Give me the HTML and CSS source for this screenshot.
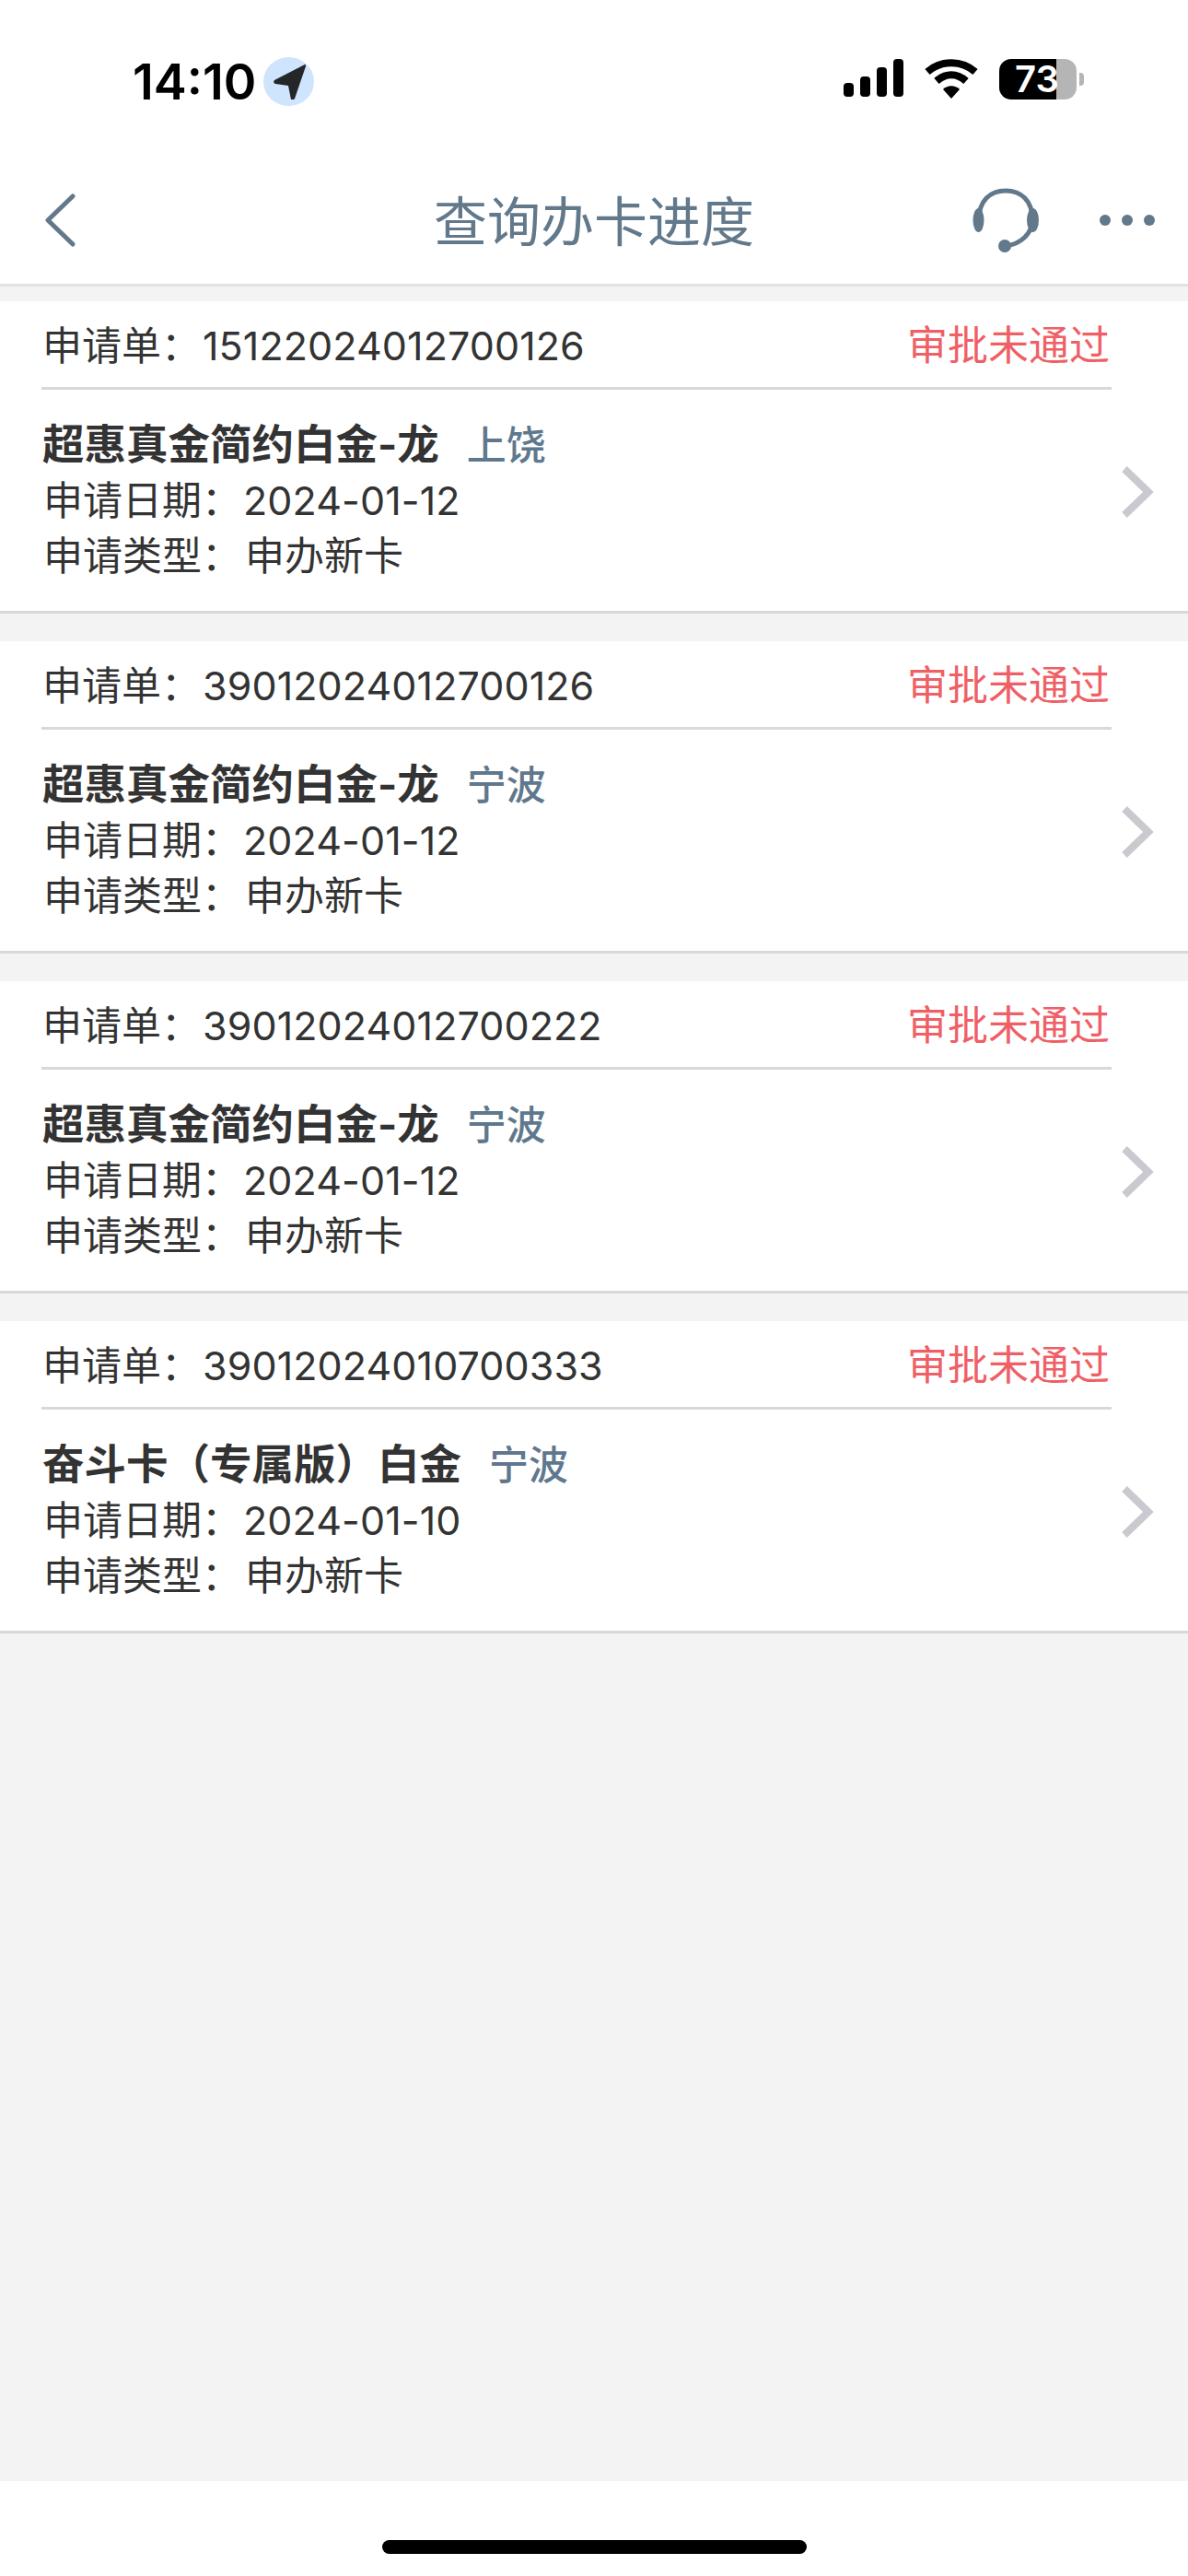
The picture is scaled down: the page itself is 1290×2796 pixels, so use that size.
FILE: index.html
```html
<!DOCTYPE html>
<html lang="zh-CN">
  <head>
    <meta charset="UTF-8" />
    <title>查询办卡进度</title>
    <link rel="stylesheet" href="styles.css">
  </head>
  <body>
    <div class="status-bar">
      <div class="status-left">
        <span class="time">14:10</span>
        <span class="location">
          <svg width="38" height="38" viewBox="0 0 38 38">
            <path d="M36 3 L3 20 Q1 23 4 24 L18 26 L21 41 Q23 43 25 40 L37 5 Q37 2 36 3 Z" transform="translate(0 -3)" fill="#24262a" />
          </svg>
        </span>
      </div>
      <div class="status-right">
        <svg width="65" height="41" viewBox="0 0 65 41" fill="#000">
          <rect x="0" y="26" width="11" height="15" rx="4" />
          <rect x="18" y="19" width="11" height="22" rx="4" />
          <rect x="36" y="9" width="11" height="32" rx="4" />
          <rect x="54" y="0" width="11" height="41" rx="4" />
        </svg>
        <svg class="wifi" width="58" height="43" viewBox="0 0 58 43" fill="none" stroke="#000" stroke-width="8">
          <path d="M3 14 C18 1 40 1 55 14" />
          <path d="M13 24 C23 15 35 15 45 24" />
          <path d="M29 43 L20 33 C25 28 33 28 38 33 Z" fill="#000" stroke="none" />
        </svg>
        <div class="battery"><span>73</span></div>
        <div class="battery-tip"></div>
      </div>
    </div>

    <div class="nav">
      <svg class="back" width="36" height="58" viewBox="0 0 36 58" fill="none" stroke="#62788b" stroke-width="5" stroke-linecap="round" stroke-linejoin="round">
        <path d="M31 3 L4 29 L31 55" />
      </svg>
      <h1>查询办卡进度</h1>
      <svg class="headset" width="72" height="70" viewBox="0 0 72 70" fill="none" stroke="#62788b" stroke-width="5">
        <path d="M7 34 C7 14 19 3 36 3 C53 3 65 14 65 34 C65 50 52 61 36 63" />
        <ellipse cx="6.500" cy="35" rx="6" ry="13" fill="#62788b" stroke="none" />
        <ellipse cx="65.500" cy="35" rx="6.500" ry="13" fill="#62788b" stroke="none" />
        <circle cx="35" cy="63" r="7" fill="#62788b" stroke="none" />
      </svg>
      <div class="dots"><i></i><i></i><i></i></div>
    </div>

    <div class="list">
      <div class="card">
        <div class="card-head">
          <span>申请单：<span class="num">15122024012700126</span></span>
          <span class="state">审批未通过</span>
        </div>
        <div class="card-body">
          <div class="info">
            <div class="name">超惠真金简约白金-龙<span class="city">上饶</span></div>
            <div class="line">申请日期：<span class="num">2024-01-12</span></div>
            <div class="line">申请类型：<span class="val">申办新卡</span></div>
          </div>
          <svg class="arrow" width="36" height="58" viewBox="0 0 36 58" fill="none" stroke="#c9c9cf" stroke-width="8">
            <path d="M4 4 L30 29 L4 54" />
          </svg>
        </div>
      </div>

      <div class="card">
        <div class="card-head">
          <span>申请单：<span class="num">39012024012700126</span></span>
          <span class="state">审批未通过</span>
        </div>
        <div class="card-body">
          <div class="info">
            <div class="name">超惠真金简约白金-龙<span class="city">宁波</span></div>
            <div class="line">申请日期：<span class="num">2024-01-12</span></div>
            <div class="line">申请类型：<span class="val">申办新卡</span></div>
          </div>
          <svg class="arrow" width="36" height="58" viewBox="0 0 36 58" fill="none" stroke="#c9c9cf" stroke-width="8">
            <path d="M4 4 L30 29 L4 54" />
          </svg>
        </div>
      </div>

      <div class="card">
        <div class="card-head">
          <span>申请单：<span class="num">39012024012700222</span></span>
          <span class="state">审批未通过</span>
        </div>
        <div class="card-body">
          <div class="info">
            <div class="name">超惠真金简约白金-龙<span class="city">宁波</span></div>
            <div class="line">申请日期：<span class="num">2024-01-12</span></div>
            <div class="line">申请类型：<span class="val">申办新卡</span></div>
          </div>
          <svg class="arrow" width="36" height="58" viewBox="0 0 36 58" fill="none" stroke="#c9c9cf" stroke-width="8">
            <path d="M4 4 L30 29 L4 54" />
          </svg>
        </div>
      </div>

      <div class="card">
        <div class="card-head">
          <span>申请单：<span class="num">39012024010700333</span></span>
          <span class="state">审批未通过</span>
        </div>
        <div class="card-body">
          <div class="info">
            <div class="name">奋斗卡（专属版）白金<span class="city">宁波</span></div>
            <div class="line">申请日期：<span class="num">2024-01-10</span></div>
            <div class="line">申请类型：<span class="val">申办新卡</span></div>
          </div>
          <svg class="arrow" width="36" height="58" viewBox="0 0 36 58" fill="none" stroke="#c9c9cf" stroke-width="8">
            <path d="M4 4 L30 29 L4 54" />
          </svg>
        </div>
      </div>
    </div>

    <div class="home-area"><div class="home-bar"></div></div>
  </body>
</html>
```

FILE: styles.css
```css
* {
  box-sizing: border-box;
}

body {
  margin: 0;
  height: 2796px;
  display: flex;
  flex-direction: column;
  background: #f3f3f3;
  font-family: Inter, "Noto Sans CJK SC", sans-serif;
  color: #333;
}

.status-bar {
  height: 176px;
  flex: none;
  background: white;
  display: flex;
  justify-content: space-between;
  padding: 62px 113px 0 144px;
}

.status-left {
  display: flex;
  align-items: flex-start;
  gap: 8px;
}

.time {
  font-size: 54px;
  font-weight: 600;
  line-height: 53px;
  color: #000;
}

.location {
  width: 55px;
  height: 53px;
  border-radius: 50%;
  background: #cfe4fd;
  display: flex;
  align-items: center;
  justify-content: center;
}

.status-right {
  display: flex;
  align-items: flex-start;
  padding-top: 2px;
}

.status-right .wifi {
  margin: 0 23px;
}

.battery {
  width: 84px;
  height: 44px;
  border-radius: 13px;
  background: linear-gradient(to right, #000 62px, #b5b5b5 62px);
  color: white;
  font-size: 40px;
  font-weight: 600;
  line-height: 44px;
  text-align: center;
}

.battery span {
  position: relative;
  left: -1px;
}

.battery-tip {
  width: 5px;
  height: 14px;
  margin: 15px 0 0 3px;
  border-radius: 0 4px 4px 0;
  background: #b5b5b5;
}

.nav {
  height: 135px;
  flex: none;
  background: white;
  border-bottom: 3px solid #e2e2e2;
  display: flex;
  align-items: center;
  padding: 0 36px 6px 48px;
  position: relative;
}

.nav h1 {
  position: absolute;
  left: 0;
  right: 0;
  top: 30px;
  margin: 0;
  text-align: center;
  font-size: 58px;
  font-weight: 400;
  line-height: 70px;
  color: #62788b;
}

.headset {
  margin-left: auto;
}

.dots {
  display: flex;
  gap: 12px;
  margin-left: 66px;
}

.dots i {
  width: 12px;
  height: 12px;
  border-radius: 50%;
  background: #62788b;
}

.list {
  flex: 1;
  padding-top: 16px;
}

.card {
  background: white;
  border-bottom: 3px solid #d8d8d8;
  margin-bottom: 30px;
  height: 339px;
}

.card-head {
  height: 96px;
  margin: 0 83px 0 45px;
  padding: 2px 2px 0 1px;
  border-bottom: 3px solid #d8d8d8;
  display: flex;
  justify-content: space-between;
  align-items: center;
  font-size: 43px;
  line-height: 60px;
}

.state {
  font-size: 44px;
  color: #ef5f66;
}

.card-body {
  display: flex;
  justify-content: space-between;
  align-items: center;
  padding: 28px 37px 0 46px;
}

.arrow {
  margin-top: -16px;
}

.name {
  font-size: 45.500px;
  font-weight: 700;
  line-height: 60px;
  padding-top: 2px;
}

.city {
  margin-left: 30px;
  font-size: 43px;
  font-weight: 500;
  color: #60788e;
}

.line {
  font-size: 43px;
  line-height: 60px;
  margin-left: 1px;
}

.num {
  font-size: 43px;
  letter-spacing: 0.1px;
  margin-left: 2px;
}

.val {
  margin-left: 4px;
}

.home-area {
  height: 103px;
  flex: none;
  background: white;
  display: flex;
  justify-content: center;
  padding-top: 64px;
}

.home-bar {
  width: 461px;
  height: 15px;
  border-radius: 8px;
  background: #000;
}
```
